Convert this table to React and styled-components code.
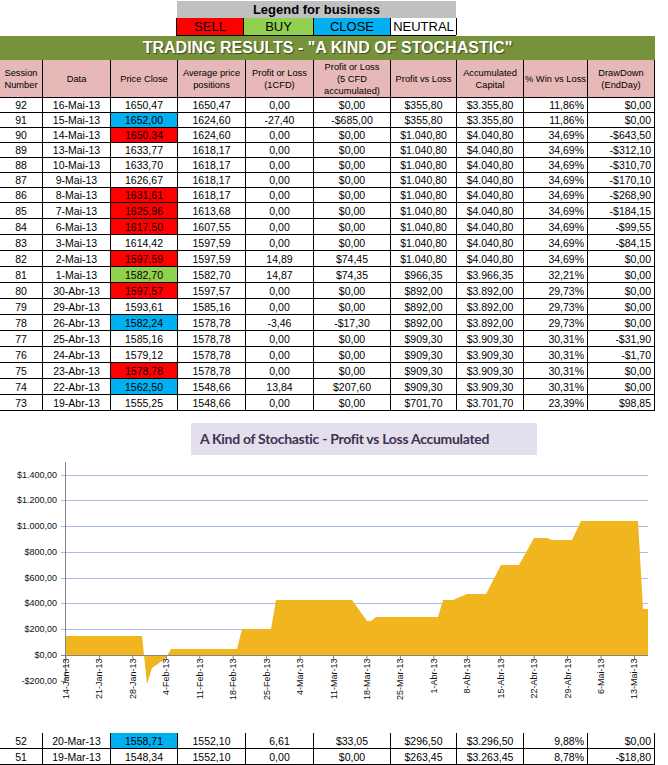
import React from "react";
import styled, { createGlobalStyle } from "styled-components";

const GlobalStyle = createGlobalStyle`
  body {
    margin: 0;
    background: #fff;
    font-family: "Liberation Sans", Arial, sans-serif;
    color: #000;
  }
`;

const COLS = "43px 68px 67px 68px 68px 77px 66px 67px 64px 67px";

const FILLS = {
  r: "#ff0000",
  g: "#92d050",
  b: "#00b0f0",
};

const Page = styled.div`
  width: 668px;
  height: 765px;
  overflow: hidden;
`;

const Legend = styled.div`
  margin: 1px 0 0 176px;
  width: 280px;
`;

const LegendTitle = styled.div`
  height: 17px;
  margin-left: 1px;
  background: #c0c0c0;
  font-size: 13px;
  font-weight: bold;
  line-height: 17px;
  text-align: center;
`;

const LegendRow = styled.div`
  display: grid;
  grid-template-columns: 67px 70px 77px 66px;
  height: 18px;
  box-sizing: border-box;
  border-left: 1px solid #000;
  border-bottom: 1px solid #000;
`;

const LegendCell = styled.div`
  background: ${(p) => FILLS[p.$fill] || "#fff"};
  border-right: 1px solid #000;
  font-size: 13px;
  line-height: 17px;
  text-align: center;
`;

const TitleBar = styled.div`
  width: 655px;
  height: 24px;
  background: #76933c;
  color: #fff;
  font-size: 16px;
  font-weight: bold;
  line-height: 24px;
  text-align: center;
  text-shadow: 1px 1px 1px rgba(40, 50, 20, 0.75);
`;

const Row = styled.div`
  display: grid;
  grid-template-columns: ${COLS};
  width: 655px;
  height: 15px;
  box-sizing: border-box;
  border-bottom: 1px solid #000;
`;

const HeadRow = styled(Row)`
  height: 38px;
  background: #e6b8b7;
`;

const Body = styled.div`
  ${Row}:nth-child(n + 8) {
    height: 16px;
  }
`;

const BottomBody = styled.div`
  margin-top: 0;
  ${Row} {
    height: 16px;
  }
`;

const HeadCell = styled.div`
  display: flex;
  align-items: center;
  justify-content: center;
  border-right: 1px solid #000;
  font-size: 9.3px;
  line-height: 12px;
  text-align: center;
  white-space: pre-line;
`;

const Cell = styled.div`
  display: flex;
  align-items: center;
  justify-content: ${(p) => (p.$right ? "flex-end" : "center")};
  padding: 0 ${(p) => (p.$right ? "3px" : "0")} 0 0;
  background: ${(p) => FILLS[p.$fill] || "transparent"};
  border-right: 1px solid #000;
  font-size: 10.5px;
  white-space: nowrap;
  overflow: hidden;
`;

const ChartBlock = styled.div`
  padding-top: 12px;
`;

const ChartTitle = styled.div`
  margin-left: 191px;
  width: 346px;
  height: 32px;
  box-sizing: border-box;
  padding-left: 9px;
  background: #e4dfec;
  color: #403151;
  font-family: Lato, "Open Sans", sans-serif;
  font-size: 14px;
  font-weight: bold;
  letter-spacing: -0.3px;
  line-height: 32px;
`;

const Plot = styled.svg`
  display: block;
  font-family: "Liberation Sans", Arial, sans-serif;
`;

const HEADERS = [
  "Session\nNumber",
  "Data",
  "Price Close",
  "Average price\npositions",
  "Profit or Loss\n(1CFD)",
  "Profit or Loss\n(5 CFD\naccumulated)",
  "Profit vs Loss",
  "Accumulated\nCapital",
  "% Win vs Loss",
  "DrawDown\n(EndDay)",
];

const ROWS = [
  ["92", "16-Mai-13", "1650,47", "", "1650,47", "0,00", "$0,00", "$355,80", "$3.355,80", "11,86%", "$0,00"],
  ["91", "15-Mai-13", "1652,00", "b", "1624,60", "-27,40", "-$685,00", "$355,80", "$3.355,80", "11,86%", "$0,00"],
  ["90", "14-Mai-13", "1650,34", "r", "1624,60", "0,00", "$0,00", "$1.040,80", "$4.040,80", "34,69%", "-$643,50"],
  ["89", "13-Mai-13", "1633,77", "", "1618,17", "0,00", "$0,00", "$1.040,80", "$4.040,80", "34,69%", "-$312,10"],
  ["88", "10-Mai-13", "1633,70", "", "1618,17", "0,00", "$0,00", "$1.040,80", "$4.040,80", "34,69%", "-$310,70"],
  ["87", "9-Mai-13", "1626,67", "", "1618,17", "0,00", "$0,00", "$1.040,80", "$4.040,80", "34,69%", "-$170,10"],
  ["86", "8-Mai-13", "1631,61", "r", "1618,17", "0,00", "$0,00", "$1.040,80", "$4.040,80", "34,69%", "-$268,90"],
  ["85", "7-Mai-13", "1625,96", "r", "1613,68", "0,00", "$0,00", "$1.040,80", "$4.040,80", "34,69%", "-$184,15"],
  ["84", "6-Mai-13", "1617,50", "r", "1607,55", "0,00", "$0,00", "$1.040,80", "$4.040,80", "34,69%", "-$99,55"],
  ["83", "3-Mai-13", "1614,42", "", "1597,59", "0,00", "$0,00", "$1.040,80", "$4.040,80", "34,69%", "-$84,15"],
  ["82", "2-Mai-13", "1597,59", "r", "1597,59", "14,89", "$74,45", "$1.040,80", "$4.040,80", "34,69%", "$0,00"],
  ["81", "1-Mai-13", "1582,70", "g", "1582,70", "14,87", "$74,35", "$966,35", "$3.966,35", "32,21%", "$0,00"],
  ["80", "30-Abr-13", "1597,57", "r", "1597,57", "0,00", "$0,00", "$892,00", "$3.892,00", "29,73%", "$0,00"],
  ["79", "29-Abr-13", "1593,61", "", "1585,16", "0,00", "$0,00", "$892,00", "$3.892,00", "29,73%", "$0,00"],
  ["78", "26-Abr-13", "1582,24", "b", "1578,78", "-3,46", "-$17,30", "$892,00", "$3.892,00", "29,73%", "$0,00"],
  ["77", "25-Abr-13", "1585,16", "", "1578,78", "0,00", "$0,00", "$909,30", "$3.909,30", "30,31%", "-$31,90"],
  ["76", "24-Abr-13", "1579,12", "", "1578,78", "0,00", "$0,00", "$909,30", "$3.909,30", "30,31%", "-$1,70"],
  ["75", "23-Abr-13", "1578,78", "r", "1578,78", "0,00", "$0,00", "$909,30", "$3.909,30", "30,31%", "$0,00"],
  ["74", "22-Abr-13", "1562,50", "b", "1548,66", "13,84", "$207,60", "$909,30", "$3.909,30", "30,31%", "$0,00"],
  ["73", "19-Abr-13", "1555,25", "", "1548,66", "0,00", "$0,00", "$701,70", "$3.701,70", "23,39%", "$98,85"],
];

const LATER_ROWS = [
  ["52", "20-Mar-13", "1558,71", "b", "1552,10", "6,61", "$33,05", "$296,50", "$3.296,50", "9,88%", "$0,00"],
  ["51", "19-Mar-13", "1548,34", "", "1552,10", "0,00", "$0,00", "$263,45", "$3.263,45", "8,78%", "-$18,80"],
];

const DataRow = ({ row }) => {
  const [num, date, close, fill, ...rest] = row;
  return (
    <Row>
      <Cell>{num}</Cell>
      <Cell>{date}</Cell>
      <Cell $fill={fill}>{close}</Cell>
      {rest.map((v, i) => (
        <Cell key={i} $right={i >= 5}>
          {v}
        </Cell>
      ))}
    </Row>
  );
};

// chart, page coordinates shifted by the top of the svg (455)
const TOP = 455;
const yOf = (v) => 655 - TOP - v * 0.1288;
const X_LEFT = 65;
const X_RIGHT = 648;

const AREA = [
  [65, 636], [142, 636], [147, 684], [152, 668], [166, 658], [171, 649],
  [237, 649], [242, 629], [271, 629], [276, 600], [352, 600], [367, 621],
  [371, 621], [376, 617], [438, 617], [443, 600], [453, 600], [467, 594],
  [486, 594], [501, 565], [519, 565], [534, 538], [547, 538], [552, 540],
  [572, 540], [581, 521], [638, 521], [643, 609], [648, 609], [648, 655],
  [65, 655],
];

const Y_TICKS = [
  [1400, "$1.400,00"],
  [1200, "$1.200,00"],
  [1000, "$1.000,00"],
  [800, "$800,00"],
  [600, "$600,00"],
  [400, "$400,00"],
  [200, "$200,00"],
  [0, "$0,00"],
  [-200, "-$200,00"],
];

const X_LABELS = [
  "14-Jan-13", "21-Jan-13", "28-Jan-13", "4-Feb-13", "11-Feb-13", "18-Feb-13",
  "25-Feb-13", "4-Mar-13", "11-Mar-13", "18-Mar-13", "25-Mar-13", "1-Abr-13",
  "8-Abr-13", "15-Abr-13", "22-Abr-13", "29-Abr-13", "6-Mai-13", "13-Mai-13",
];

const ProfitChart = () => {
  const zero = Math.round(yOf(0)) + 0.5;
  return (
    <Plot width="668" height="278" viewBox="0 0 668 278">
      {Y_TICKS.filter(([v]) => v > 0).map(([v]) => {
        const y = Math.round(yOf(v)) + 0.5;
        return <line key={v} x1={61} x2={X_RIGHT} y1={y} y2={y} stroke="#a7bde6" />;
      })}
      <polygon
        points={AREA.map(([x, y]) => `${x},${y - TOP}`).join(" ")}
        fill="#f1b51f"
      />
      <line x1={61} x2={X_RIGHT} y1={zero} y2={zero} stroke="#868686" />
      <line x1={X_LEFT + 0.5} x2={X_LEFT + 0.5} y1={7} y2={227} stroke="#868686" />
      <line x1={61} x2={X_LEFT} y1={226.5} y2={226.5} stroke="#868686" />
      {Y_TICKS.map(([v, label]) => (
        <text key={label} x={57} y={yOf(v) + 3} fontSize="9" textAnchor="end" fill="#111">
          {label}
        </text>
      ))}
      {X_LABELS.map((label, i) => {
        const x = 66 + i * 33.44;
        return (
          <g key={label}>
            <line x1={x} x2={x} y1={zero} y2={zero + 4} stroke="#868686" />
            <text
              transform={`translate(${x} ${zero + 3}) rotate(-90)`}
              fontSize="9"
              textAnchor="end"
              dominantBaseline="central"
              fill="#111"
            >
              {label}
            </text>
          </g>
        );
      })}
    </Plot>
  );
};

export default function App() {
  return (
    <Page>
      <GlobalStyle />
      <Legend>
        <LegendTitle>Legend for business</LegendTitle>
        <LegendRow>
          <LegendCell $fill="r">SELL</LegendCell>
          <LegendCell $fill="g">BUY</LegendCell>
          <LegendCell $fill="b">CLOSE</LegendCell>
          <LegendCell>NEUTRAL</LegendCell>
        </LegendRow>
      </Legend>
      <TitleBar>TRADING RESULTS - "A KIND OF STOCHASTIC"</TitleBar>
      <HeadRow>
        {HEADERS.map((h) => (
          <HeadCell key={h}>{h}</HeadCell>
        ))}
      </HeadRow>
      <Body>
        {ROWS.map((r) => (
          <DataRow key={r[0]} row={r} />
        ))}
      </Body>
      <ChartBlock>
        <ChartTitle>A Kind of Stochastic - Profit vs Loss Accumulated</ChartTitle>
        <ProfitChart />
      </ChartBlock>
      <BottomBody>
        {LATER_ROWS.map((r) => (
          <DataRow key={r[0]} row={r} />
        ))}
      </BottomBody>
    </Page>
  );
}
